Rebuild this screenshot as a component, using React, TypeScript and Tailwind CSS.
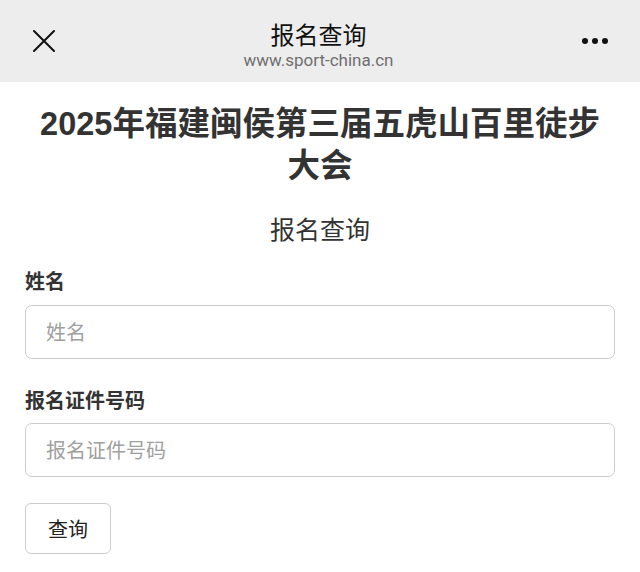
import React from "react";

export default function App() {
  const font = { fontFamily: '"Noto Sans CJK SC", "Noto Sans", sans-serif' };
  return (
    <div className="w-[640px] h-[572px] bg-white overflow-hidden" style={font}>
      <div className="h-[82px] bg-[#ededed] flex items-center justify-between px-[33px]">
        <svg width="22" height="22" viewBox="0 0 22 22" className="shrink-0">
          <path d="M1 1 L21 21 M21 1 L1 21" stroke="#111" strokeWidth="2" strokeLinecap="round" />
        </svg>
        <div className="flex flex-col items-center pt-[8px]">
          <div className="text-[24px] leading-[30px] text-[#111]">报名查询</div>
          <div className="text-[17px] leading-[22px] text-[#6f6f6f]" style={{ fontFamily: '"Roboto", "Liberation Sans", sans-serif' }}>www.sport-china.cn</div>
        </div>
        <div className="flex gap-[4px] mr-[-1px]">
          <span className="w-[6px] h-[6px] rounded-full bg-[#111]" />
          <span className="w-[6px] h-[6px] rounded-full bg-[#111]" />
          <span className="w-[6px] h-[6px] rounded-full bg-[#111]" />
        </div>
      </div>
      <div className="px-[25px]">
        <h1
          className="text-center font-bold text-[32.5px] leading-[42px] text-[#333] mt-[21px] px-[10px]"
          style={{ fontFamily: '"Liberation Sans", "Noto Sans CJK SC", sans-serif' }}
        >
          2025年福建闽侯第三届五虎山百里徒步大会
        </h1>
        <div className="text-center text-[25px] leading-[36px] text-[#333] mt-[23px]">报名查询</div>
        <div className="mt-[21px] text-[20px] leading-[28px] font-bold text-[#333]">姓名</div>
        <div className="mt-[10px] h-[54px] border border-[#cccccc] rounded-[7px] flex items-center px-[20px] text-[20px] text-[#a0a0a0]">
          姓名
        </div>
        <div className="mt-[27px] text-[20px] leading-[28px] font-bold text-[#333]">报名证件号码</div>
        <div className="mt-[9px] h-[54px] border border-[#cccccc] rounded-[7px] flex items-center px-[20px] text-[20px] text-[#a0a0a0]">
          报名证件号码
        </div>
        <div className="mt-[26px] w-[86px] h-[51px] border border-[#cccccc] rounded-[6px] flex items-center justify-center text-[20px] text-[#222]">
          查询
        </div>
      </div>
    </div>
  );
}
